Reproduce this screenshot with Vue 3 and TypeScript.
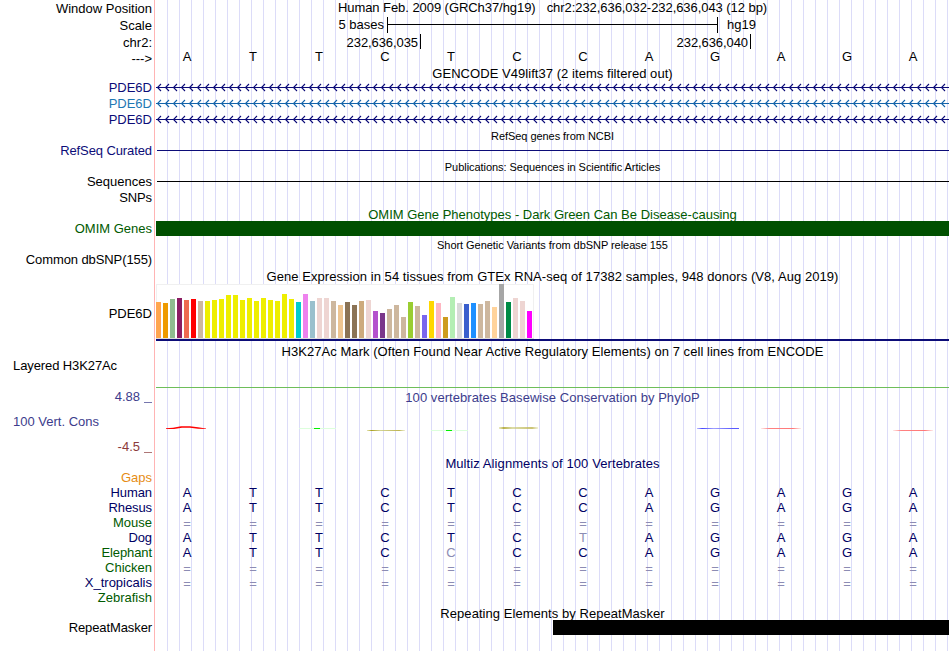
<template>
  <div class="browser">
    <div class="labels">
      <div
        v-for="(label, i) in labels"
        :key="i"
        class="label"
        :class="[label.tone, { left: label.left, tight: label.tight }]"
        :style="{ marginTop: label.gap + 'px' }"
      >
        <span>{{ label.text }}</span>
        <span v-if="label.tick" class="label-tick"></span>
      </div>
    </div>

    <div class="tracks">
      <div class="title position">
        <span>Human Feb. 2009 (GRCh37/hg19)</span>
        <span>chr2:232,636,032-232,636,043 (12 bp)</span>
      </div>

      <div class="scale">
        <span class="scale-size">5 bases</span>
        <span class="scale-bar"></span>
        <span class="scale-db">hg19</span>
      </div>

      <div class="coords">
        <span class="coord first">232,636,035</span>
        <span class="coord second">232,636,040</span>
      </div>

      <div class="bases reference">
        <span v-for="(base, i) in reference" :key="i">{{ base }}</span>
      </div>

      <div class="title gencode">GENCODE V49lift37 (2 items filtered out)</div>
      <svg
        v-for="(color, i) in transcripts"
        :key="i"
        class="transcript"
        width="793"
        height="16"
        :stroke="color"
        fill="none"
      >
        <path d="M0 7.5H793" />
        <path :d="chevrons" stroke-width="1.1" />
      </svg>

      <div class="title small refseq">RefSeq genes from NCBI</div>
      <div class="line-row"><span class="line navy"></span></div>

      <div class="title small pubs">Publications: Sequences in Scientific Articles</div>
      <div class="line-row sequences"><span class="line"></span></div>

      <div class="title omim">OMIM Gene Phenotypes - Dark Green Can Be Disease-causing</div>
      <div class="omim-bar"></div>

      <div class="title small dbsnp">Short Genetic Variants from dbSNP release 155</div>

      <div class="title gtex">Gene Expression in 54 tissues from GTEx RNA-seq of 17382 samples, 948 donors (V8, Aug 2019)</div>
      <div class="expression">
        <div class="chart">
          <span
            v-for="(bar, i) in tissues"
            :key="i"
            class="tissue"
            :style="{ height: bar[0] + 'px', backgroundColor: bar[1] }"
          ></span>
        </div>
        <div class="gene-model"></div>
      </div>

      <div class="title h3k27">H3K27Ac Mark (Often Found Near Active Regulatory Elements) on 7 cell lines from ENCODE</div>
      <div class="h3k27-track"></div>

      <div class="title phylop">100 vertebrates Basewise Conservation by PhyloP</div>
      <svg class="phylop-track" width="793" height="51">
        <defs>
          <linearGradient id="olive">
            <stop offset="0" stop-color="#c8c864" stop-opacity="0.5" />
            <stop offset="0.12" stop-color="#aaa020" />
            <stop offset="0.35" stop-color="#c8c878" stop-opacity="0.8" />
            <stop offset="0.85" stop-color="#beb450" />
            <stop offset="1" stop-color="#d2d28c" stop-opacity="0.4" />
          </linearGradient>
          <linearGradient id="blue">
            <stop offset="0" stop-color="#7878ff" stop-opacity="0.5" />
            <stop offset="0.12" stop-color="#4646ff" />
            <stop offset="0.4" stop-color="#a0a0ff" />
            <stop offset="0.85" stop-color="#5a5aff" />
            <stop offset="1" stop-color="#5a5aff" />
          </linearGradient>
          <linearGradient id="red">
            <stop offset="0" stop-color="#ff8c8c" stop-opacity="0.2" />
            <stop offset="0.2" stop-color="#ff8282" />
            <stop offset="0.8" stop-color="#ff7878" />
            <stop offset="1" stop-color="#ff8c8c" stop-opacity="0.2" />
          </linearGradient>
        </defs>
        <path d="M10 23.2L17 22.8L25 21.2H34L42 22.3L50 23.4V24L42 23.8L34 22.7H26L18 24H10Z" fill="#ff0000" />
        <rect x="143" y="23" width="37" height="1" fill="#dcffdc" />
        <rect x="158" y="23" width="6" height="1" fill="#00f000" />
        <rect x="211" y="25" width="38" height="1" fill="url(#olive)" />
        <rect x="275" y="25" width="37" height="1" fill="#dcffdc" />
        <rect x="290" y="25" width="6" height="1" fill="#00f000" />
        <rect x="343" y="22" width="39" height="2" fill="url(#olive)" opacity="0.8" />
        <rect x="541" y="23" width="42" height="1" fill="url(#blue)" />
        <rect x="605" y="23" width="40" height="1" fill="url(#red)" />
        <rect x="737" y="25" width="40" height="1" fill="url(#red)" />
      </svg>

      <div class="title multiz">Multiz Alignments of 100 Vertebrates</div>
      <div v-for="row in alignments" :key="row.species" class="bases aligned">
        <span
          v-for="(base, i) in row.bases"
          :key="i"
          :class="{ faded: base !== reference[i], gap: base === '=' }"
        >{{ base }}</span>
      </div>

      <div class="title repeats">Repeating Elements by RepeatMasker</div>
      <div class="repeat-bar"></div>
    </div>
  </div>
</template>

<script setup lang="ts">
interface TrackLabel {
  text: string;
  gap: number;
  tone?: string;
  left?: boolean;
  tight?: boolean;
  tick?: boolean;
}

interface Alignment {
  species: string;
  bases: string;
}

const labels: TrackLabel[] = [
  { text: "Window Position", gap: 1 },
  { text: "Scale", gap: 2 },
  { text: "chr2:", gap: 2 },
  { text: "--->", gap: 1 },
  { text: "PDE6D", gap: 14, tone: "navy" },
  { text: "PDE6D", gap: 1, tone: "azure" },
  { text: "PDE6D", gap: 1, tone: "navy" },
  { text: "RefSeq Curated", gap: 16, tone: "navy", tight: true },
  { text: "Sequences", gap: 16 },
  { text: "SNPs", gap: 1, tight: true },
  { text: "OMIM Genes", gap: 16, tone: "green" },
  { text: "Common dbSNP(155)", gap: 16, tight: true },
  { text: "PDE6D", gap: 39 },
  { text: "Layered H3K27Ac", gap: 37, left: true, tight: true },
  { text: "4.88", gap: 16, tone: "indigo", tick: true },
  { text: "100 Vert. Cons", gap: 10, tone: "indigo", left: true },
  { text: "-4.5", gap: 10, tone: "maroon", tick: true },
  { text: "Gaps", gap: 16, tone: "orange" },
  { text: "Human", gap: 0, tone: "deep", tight: true },
  { text: "Rhesus", gap: 0, tone: "deep", tight: true },
  { text: "Mouse", gap: 0, tone: "green" },
  { text: "Dog", gap: 0, tone: "deep", tight: true },
  { text: "Elephant", gap: 0, tone: "green", tight: true },
  { text: "Chicken", gap: 0, tone: "green" },
  { text: "X_tropicalis", gap: 0, tone: "deep" },
  { text: "Zebrafish", gap: 0, tone: "green" },
  { text: "RepeatMasker", gap: 15, tight: true },
];

const reference = "ATTCTCCAGAGA";

const alignments: Alignment[] = [
  { species: "Human", bases: "ATTCTCCAGAGA" },
  { species: "Rhesus", bases: "ATTCTCCAGAGA" },
  { species: "Mouse", bases: "============" },
  { species: "Dog", bases: "ATTCTCTAGAGA" },
  { species: "Elephant", bases: "ATTCCCCAGAGA" },
  { species: "Chicken", bases: "============" },
  { species: "X_tropicalis", bases: "============" },
];

const transcripts = ["#0c0c78", "#1464aa", "#0c0c78"];

// strand arrows, one every 8px
const chevrons = Array.from({ length: 99 }, (_, i) => {
  const x = 1 + i * 8;
  return `M${x + 4} 4L${x + 0.5} 7.5L${x + 4} 11`;
}).join("");

const yellow = "#eeee00";
const tan = "#cdb79e";
const rose = "#eed5d2";

// median expression height and tissue color
const tissues: [number, string][] = [
  [36, "#ffa54f"],
  [35, "#ee9a00"],
  [39, "#8fbc8f"],
  [40, "#8b1c62"],
  [38, "#ee6a50"],
  [39, "#ff0000"],
  [37, tan],
  [37, yellow],
  [38, yellow],
  [39, yellow],
  [43, yellow],
  [43, yellow],
  [38, yellow],
  [40, yellow],
  [37, yellow],
  [40, yellow],
  [38, yellow],
  [37, yellow],
  [44, yellow],
  [39, yellow],
  [36, "#00cdcd"],
  [44, "#ee82ee"],
  [37, "#9ac0cd"],
  [40, rose],
  [40, rose],
  [37, tan],
  [33, "#eec591"],
  [36, "#8b7355"],
  [33, "#8b7355"],
  [37, "#cdaa7d"],
  [38, rose],
  [27, "#b452cd"],
  [25, "#7a378b"],
  [29, tan],
  [33, tan],
  [21, tan],
  [36, "#9acd32"],
  [32, tan],
  [23, "#7a67ee"],
  [37, "#ffd700"],
  [35, "#ffb6c1"],
  [21, "#cd9b1d"],
  [41, "#b4eeb4"],
  [35, "#d9d9d9"],
  [34, "#3a5fcd"],
  [35, "#1e90ff"],
  [34, tan],
  [37, tan],
  [31, "#ffd39b"],
  [54, "#a6a6a6"],
  [36, "#008b45"],
  [40, rose],
  [37, rose],
  [27, "#ff00ff"],
];
</script>

<style>
body {
  background: #ffffff;
}
</style>

<style scoped>
.browser {
  display: flex;
  width: 950px;
  height: 651px;
  overflow: hidden;
  background: #ffffff;
  color: #000000;
  font-family: "Liberation Sans", Arial, sans-serif;
  font-size: 13px;
  line-height: 15px;
}

.labels {
  box-sizing: border-box;
  width: 155px;
  height: 651px;
  margin-right: 1px;
  padding-right: 2px;
  border-right: 1px solid #ffb4b4;
  flex-shrink: 0;
}

.label {
  display: flex;
  justify-content: flex-end;
  height: 15px;
  white-space: nowrap;
}

.label.left {
  justify-content: flex-start;
  padding-left: 13px;
}

.label.tight {
  letter-spacing: -0.1px;
}

.label-tick {
  width: 8px;
  height: 1px;
  margin: 13px 0 0 4px;
  background: currentColor;
  opacity: 0.7;
}

.navy {
  color: #0c0c78;
}

.azure {
  color: #1e78b4;
}

.green {
  color: #005a00;
}

.indigo {
  color: #3c3c8c;
}

.maroon {
  color: #8c3c3c;
}

.orange {
  color: #e68c14;
}

.deep {
  color: #000064;
}

.tracks {
  display: flex;
  flex-direction: column;
  width: 793px;
  height: 651px;
  flex-shrink: 0;
  background: repeating-linear-gradient(
    to right,
    transparent 0,
    transparent 11px,
    #dcdcf8 11px,
    #dcdcf8 12px
  );
}

.title {
  flex-shrink: 0;
  height: 15px;
  letter-spacing: 0.05px;
  text-align: center;
  white-space: nowrap;
}

.title.small {
  box-sizing: border-box;
  padding-top: 1px;
  font-size: 11px;
  letter-spacing: -0.05px;
}

.title.position {
  display: flex;
  justify-content: center;
  gap: 11px;
  height: 17px;
  letter-spacing: -0.06px;
}

.scale {
  display: flex;
  height: 17px;
  flex-shrink: 0;
}

.scale-size {
  width: 228px;
  margin-right: 3px;
  text-align: right;
}

.scale-bar {
  box-sizing: border-box;
  width: 331px;
  height: 16px;
  border: solid #000000;
  border-width: 0 1px;
  background: linear-gradient(#000000, #000000) 0 7px / 100% 1px no-repeat;
}

.scale-db {
  margin-left: 9px;
}

.coords {
  display: flex;
  height: 15px;
  flex-shrink: 0;
}

.coord {
  box-sizing: border-box;
  height: 15px;
  padding: 1px 2px 0 0;
  border-right: 1px solid #000000;
  letter-spacing: -0.08px;
  text-align: right;
}

.coord.first {
  width: 265px;
}

.coord.second {
  width: 330px;
}

.bases {
  display: grid;
  grid-template-columns: repeat(12, 66px);
  height: 15px;
  margin-left: -2px;
  flex-shrink: 0;
  text-align: center;
}

.bases.reference {
  height: 17px;
}

.aligned {
  color: #000064;
}

.faded {
  color: #8c8cb4;
}

.gap {
  padding-top: 1px;
}

.title.gencode {
  height: 14px;
}

.transcript {
  display: block;
  flex-shrink: 0;
}

.line-row {
  height: 16px;
  flex-shrink: 0;
}

.line-row.sequences {
  height: 33px;
}

.line {
  display: block;
  height: 1px;
  margin: 7px 0 0 1px;
  background: currentColor;
}

.title.omim {
  height: 14px;
  color: #005a00;
  letter-spacing: 0;
}

.omim-bar {
  position: relative;
  height: 15px;
  flex-shrink: 0;
  background: #005000;
}

.title.dbsnp {
  height: 33px;
  padding-top: 2px;
}

.expression {
  height: 60px;
  flex-shrink: 0;
}

.chart {
  box-sizing: border-box;
  display: flex;
  align-items: flex-end;
  gap: 2px;
  width: 378px;
  height: 55px;
  background: #ffffff;
  border-bottom: 1px solid #dcdcdc;
  box-shadow: inset 1px 1px #f0f0f0, inset -1px 0 #f0f0f0;
}

.tissue {
  width: 5px;
}

.gene-model {
  height: 2px;
  background: #0c0c78;
}

.h3k27-track {
  box-sizing: border-box;
  height: 29px;
  margin-bottom: 2px;
  flex-shrink: 0;
  border-bottom: 1px solid #6ebe5a;
}

.title.phylop {
  color: #3c3c8c;
}

.phylop-track {
  display: block;
  flex-shrink: 0;
}

.title.multiz {
  height: 29px;
  color: #000064;
  letter-spacing: 0.09px;
}

.title.repeats {
  height: 14px;
  margin-top: 16px;
}

.repeat-bar {
  position: relative;
  height: 15px;
  margin-left: 397px;
  flex-shrink: 0;
  background: #000000;
}
</style>
